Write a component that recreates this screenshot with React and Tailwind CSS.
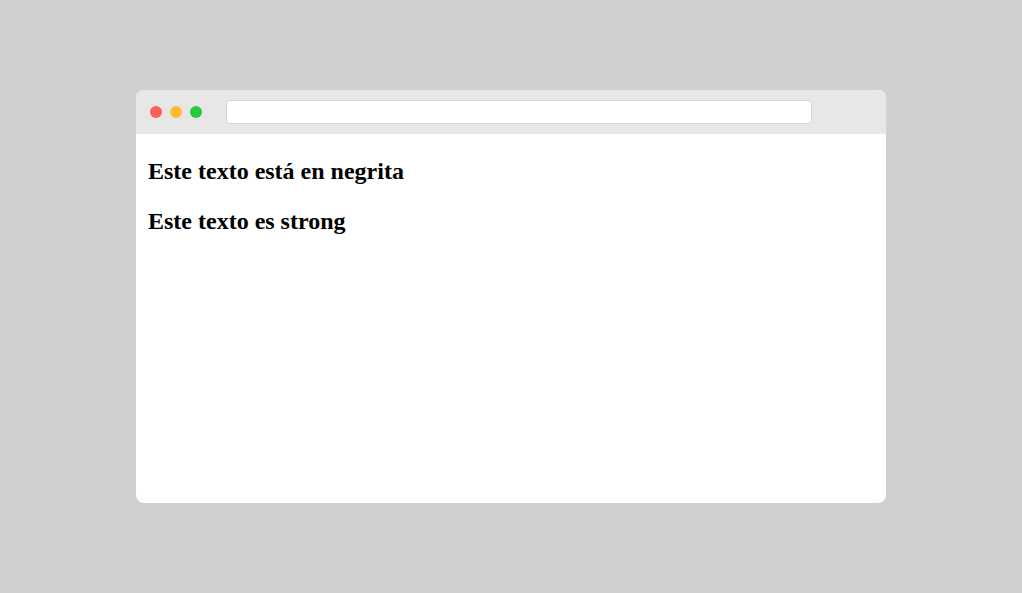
export default function App() {
  return (
    <div className="w-[1022px] h-[593px] bg-[#d0d0d0] flex items-center justify-center">
      <div className="w-[750px] h-[413px] bg-white rounded-lg overflow-hidden flex flex-col">
        <div className="h-[44px] bg-[#e7e7e7] flex items-center pl-[14px] shrink-0">
          <div className="flex gap-2">
            <span className="w-3 h-3 rounded-full bg-[#ff5f57]"></span>
            <span className="w-3 h-3 rounded-full bg-[#febc2e]"></span>
            <span className="w-3 h-3 rounded-full bg-[#28c840]"></span>
          </div>
          <div className="ml-[24px] w-[586px] h-[24px] bg-white rounded border border-[#d4d4d4]"></div>
        </div>
        <div className="px-3 pt-[23px] text-black">
          <p className="font-['Liberation_Serif',serif] font-bold text-[24px] leading-[28px]">Este texto está en negrita</p>
          <p className="font-['Liberation_Serif',serif] font-bold text-[24px] leading-[28px] mt-[22px]">Este texto es strong</p>
        </div>
      </div>
    </div>
  );
}
